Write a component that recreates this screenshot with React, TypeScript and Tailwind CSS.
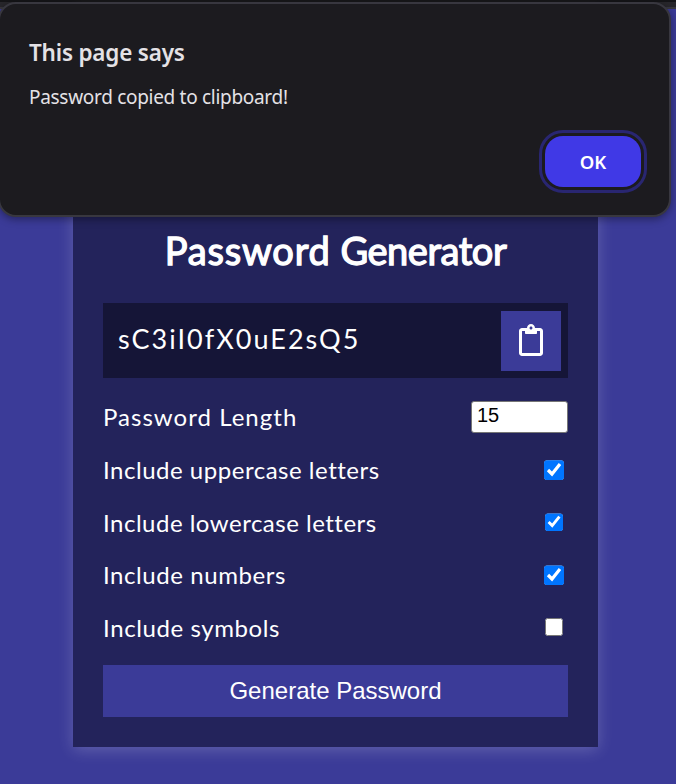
import React from "react";
import { FaRegClipboard } from "react-icons/fa";

type Option = { label: string; checked: boolean; box: string; text: string };

const options: Option[] = [
  { label: "Include uppercase letters", checked: true, box: "size-5 mr-1", text: "tracking-[0.52px]" },
  { label: "Include lowercase letters", checked: true, box: "size-[18px] mr-[5px] mb-px", text: "tracking-[0.5px]" },
  { label: "Include numbers", checked: true, box: "size-5 mr-1", text: "tracking-[0.57px]" },
  { label: "Include symbols", checked: false, box: "size-[18px] mr-[5px] mb-[2px]", text: "tracking-[0.6px]" },
];

function AlertDialog() {
  return (
    <div
      role="alertdialog"
      className="absolute -left-[2px] top-[2px] flex h-[215px] w-[673px] flex-col rounded-[18px] border-2 border-[#38373f] bg-[#1c1b1f] pl-7 pr-7 pt-[34px] font-['Noto_Sans',sans-serif] text-[#e4e2e6] shadow-[0_2px_8px_rgba(0,0,0,0.4)]"
    >
      <h2 className="ml-px text-[22.5px] font-semibold leading-[30px] tracking-[-0.2px]">This page says</h2>
      <p className="ml-px mt-[15px] text-[19px] leading-[28px] tracking-[-0.3px]">Password copied to clipboard!</p>
      <button className="mt-[25px] h-[51px] w-24 self-end rounded-[18px] bg-[#4039e6] text-[18.5px] font-semibold text-white outline-3 outline-offset-3 outline-[#292671]">
        OK
      </button>
    </div>
  );
}

export default function App() {
  return (
    <div className="relative h-[784px] w-[676px] overflow-hidden bg-[#3b3b98] font-[Lato,sans-serif] text-white">
      <div className="h-[9px] border-t-2 border-b-2 border-t-[#151518] border-b-[#3a3940] bg-[#28272c]" />
      <main className="ml-[73px] h-[738px] w-[525px] bg-[#23235b] px-[30px] pt-[217px] shadow-[0_3px_15px_rgba(255,255,255,0.2)]">
        <h1 className="text-center text-[38px] font-normal leading-[48px] [-webkit-text-stroke:1.3px_white]">
          <span className="tracking-[0.8px]">Password</span>{" "}
          <span className="tracking-[-0.45px]">Generator</span>
        </h1>
        <div className="mt-[29px] flex h-[75px] items-center justify-between bg-[#151537] pl-[15px] pr-[7px]">
          <span className="-mt-[3px] text-[27px] tracking-[2px]">sC3iI0fX0uE2sQ5</span>
          <button className="flex size-[60px] items-center justify-center bg-[#3b3b98] pb-[2px] pr-px">
            <FaRegClipboard className="size-8" />
          </button>
        </div>
        <div className="mt-[13px]">
          <label className="flex h-[53px] items-center justify-between text-2xl">
            <span className="-mt-[2px] tracking-[1.03px]">Password Length</span>
            <input
              defaultValue="15"
              className="mb-[2px] h-8 w-[97px] rounded-[3px] border border-[#767676] bg-white pb-[2px] pl-[5px] pr-1 font-['Liberation_Sans',sans-serif] text-[20px] text-black"
            />
          </label>
          {options.map((o) => (
            <label key={o.label} className="flex h-[52.6px] items-center justify-between text-2xl">
              <span className={o.text}>{o.label}</span>
              <input
                type="checkbox"
                defaultChecked={o.checked}
                className={`${o.box} [clip-path:inset(0_round_3px)]`}
              />
            </label>
          ))}
        </div>
        <button className="mt-[11px] block h-[52px] w-full bg-[#3b3b98] font-['Liberation_Sans',sans-serif] text-2xl">
          Generate Password
        </button>
      </main>
      <AlertDialog />
    </div>
  );
}
